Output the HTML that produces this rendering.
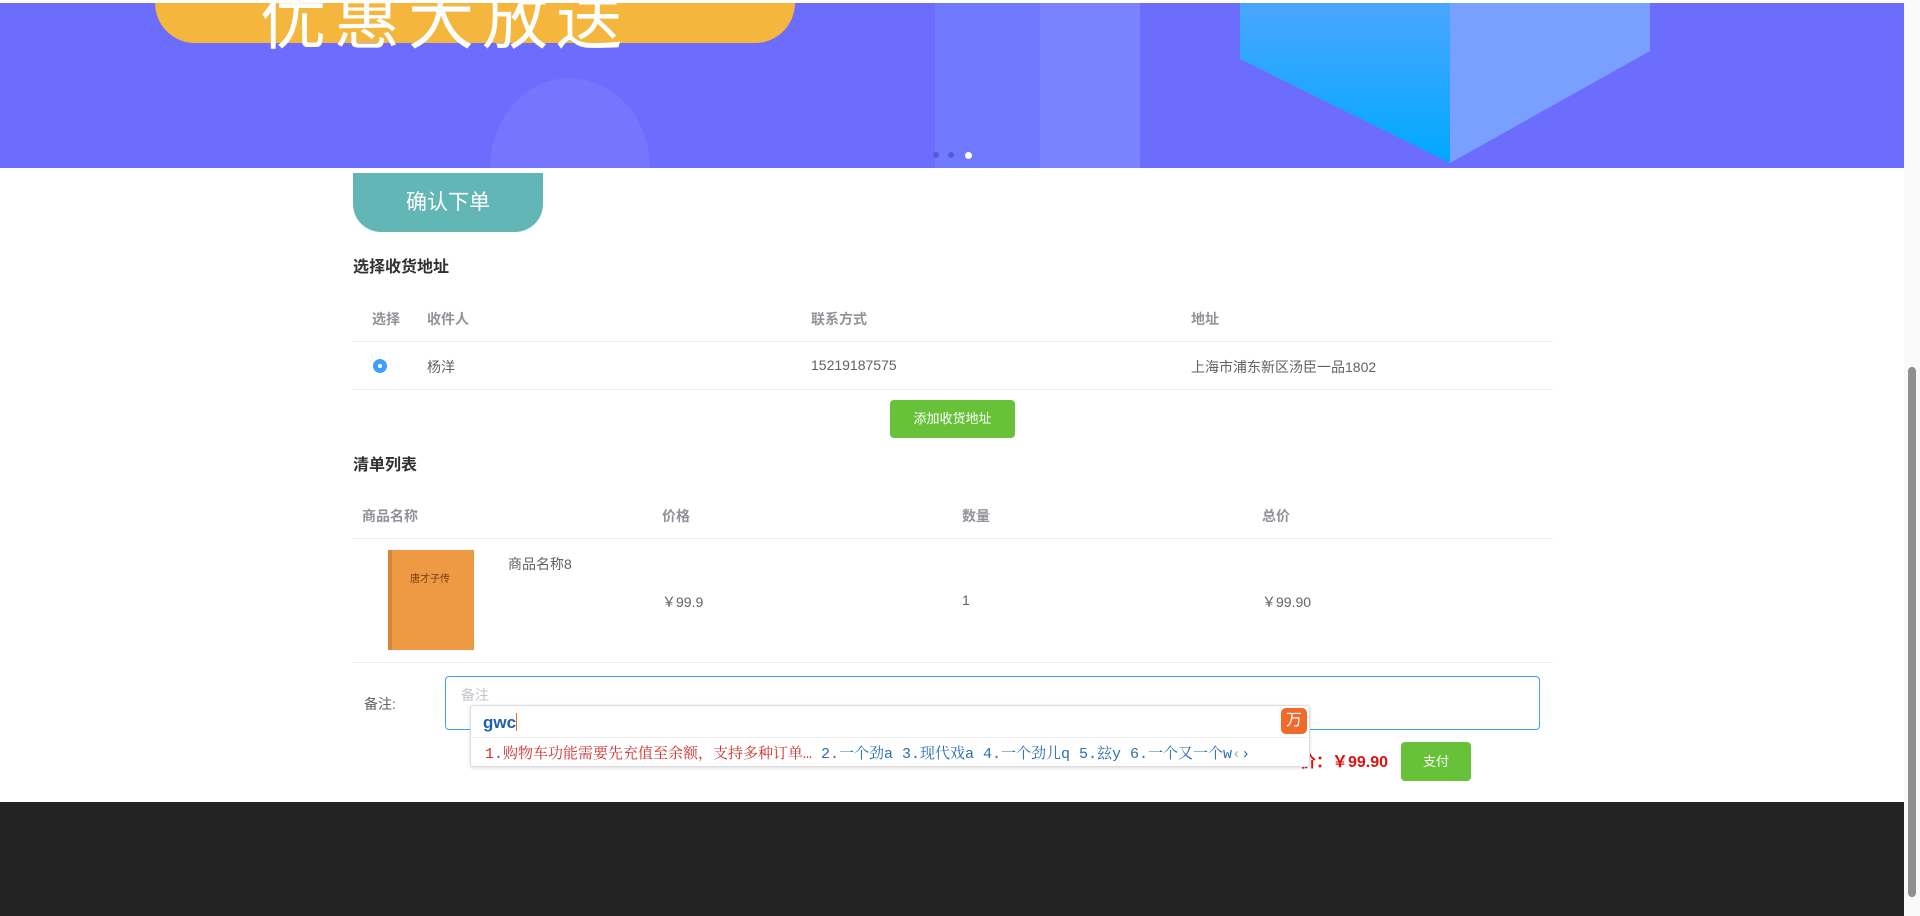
<!DOCTYPE html>
<html><head><meta charset="utf-8"><style>
*{margin:0;padding:0;box-sizing:border-box}
body{width:1920px;height:916px;overflow:hidden;background:#fff;font-family:"Liberation Sans","Noto Sans CJK SC",sans-serif;color:#606266;position:relative;font-size:14px}
.a{position:absolute}
.banner{left:0;top:3px;width:1904px;height:165px;background:#6c6cfd;overflow:hidden}
.sb{left:1904px;top:0;width:16px;height:916px;background:#f9f9f9}
.thumb{left:1908px;top:367px;width:8px;height:530px;background:#8f8f8f;border-radius:4px}
.h{font-weight:bold;color:#303133;font-size:16px}
.th{color:#909399;font-weight:bold;font-size:14px}
.line{height:1px;background:#ebeef5}
.btn{background:#67c23a;color:#fff;border-radius:4px;font-size:13px;text-align:center}
</style></head><body>
<div class="a banner">
  <div class="a" style="left:155px;top:-40px;width:640px;height:80px;background:#f4b63c;border-radius:0 0 40px 40px"></div>
  <div class="a" style="left:260px;top:-36px;font-size:66px;color:#fff;letter-spacing:8px">优惠大放送</div>
  <div class="a" style="left:490px;top:75px;width:160px;height:180px;background:#7575ff;border-radius:50%"></div>
  <div class="a" style="left:935px;top:0;width:200px;height:165px;background:#7179ff"></div>
  <div class="a" style="left:1040px;top:0;width:100px;height:165px;background:#7a82ff"></div>
  <div class="a" style="left:1240px;top:0;width:210px;height:160px;background:linear-gradient(#4aa6ff,#00a8ff);clip-path:polygon(0 0,100% 0,100% 100%,0 35%)"></div>
  <div class="a" style="left:1450px;top:0;width:200px;height:160px;background:#7aa0ff;clip-path:polygon(0 0,100% 0,100% 30%,0 100%)"></div>
  <div class="a" style="left:933px;top:149px;width:6px;height:6px;border-radius:3px;background:#5a5ad0"></div>
  <div class="a" style="left:948px;top:149px;width:6px;height:6px;border-radius:3px;background:#5a5ad0"></div>
  <div class="a" style="left:965px;top:149px;width:7px;height:7px;border-radius:4px;background:#fff"></div>
</div>
<div class="a sb"></div><div class="a thumb"></div>
<div class="a" style="left:353px;top:173px;width:190px;height:59px;background:#63b6b6;border-radius:0 0 28px 28px;color:#fff;font-size:21px;text-align:center;line-height:59px">确认下单</div>
<div class="a h" style="left:353px;top:253px">选择收货地址</div>
<div class="a th" style="left:372px;top:309px">选择</div>
<div class="a th" style="left:427px;top:309px">收件人</div>
<div class="a th" style="left:811px;top:309px">联系方式</div>
<div class="a th" style="left:1191px;top:309px">地址</div>
<div class="a line" style="left:353px;top:341px;width:1200px"></div>
<div class="a" style="left:373px;top:359px;width:14px;height:14px;border-radius:7px;background:#409eff"><div class="a" style="left:5px;top:5px;width:4px;height:4px;border-radius:2px;background:#fff"></div></div>
<div class="a" style="left:427px;top:357px">杨洋</div>
<div class="a" style="left:811px;top:357px">15219187575</div>
<div class="a" style="left:1191px;top:357px">上海市浦东新区汤臣一品1802</div>
<div class="a line" style="left:353px;top:389px;width:1200px"></div>
<div class="a btn" style="left:890px;top:400px;width:125px;height:38px;line-height:38px">添加收货地址</div>
<div class="a h" style="left:353px;top:451px">清单列表</div>
<div class="a th" style="left:362px;top:506px">商品名称</div>
<div class="a th" style="left:662px;top:506px">价格</div>
<div class="a th" style="left:962px;top:506px">数量</div>
<div class="a th" style="left:1262px;top:506px">总价</div>
<div class="a line" style="left:353px;top:538px;width:1200px"></div>
<div class="a" style="left:388px;top:550px;width:86px;height:100px;background:#ee9a45;border-left:4px solid #d8853a"><div class="a" style="left:18px;top:20px;font-size:10px;color:#7a3a10">唐才子传</div></div>
<div class="a" style="left:508px;top:554px">商品名称8</div>
<div class="a" style="left:662px;top:592px">￥99.9</div>
<div class="a" style="left:962px;top:592px">1</div>
<div class="a" style="left:1262px;top:592px">￥99.90</div>
<div class="a line" style="left:353px;top:662px;width:1200px"></div>
<div class="a" style="left:364px;top:694px">备注:</div>
<div class="a" style="left:445px;top:676px;width:1095px;height:54px;border:1px solid #409eff;border-radius:4px"><span class="a" style="left:15px;top:8px;color:#c0c4cc">备注</span></div>
<div class="a" style="left:1300px;top:748px;color:#e01010;font-weight:bold;font-size:16px">价：￥99.90</div>
<div class="a btn" style="left:1401px;top:742px;width:70px;height:39px;line-height:39px">支付</div>
<div class="a" style="left:470px;top:705px;width:840px;height:62px;background:#fff;border:1px solid #ddd;border-radius:3px;box-shadow:0 1px 3px rgba(0,0,0,.15)">
  <div class="a" style="left:12px;top:7px;color:#1e5fb0;font-weight:bold;font-size:17px">gwc<span style="display:inline-block;width:1px;height:18px;background:#e07020;vertical-align:-3px"></span></div>
  <div class="a" style="left:810px;top:2px;width:26px;height:26px;background:#f26a2a;border-radius:5px;color:#fff;text-align:center;line-height:26px;font-size:16px">万</div>
  <div class="a line" style="left:0;top:31px;width:840px;background:#eee"></div>
  <div class="a" style="left:14px;top:36px;font-family:'Liberation Mono','Noto Serif CJK SC',monospace;font-size:15px;white-space:nowrap"><span style="color:#d43030">1.购物车功能需要先充值至余额，支持多种订单…</span><span style="color:#2a6fb0">&nbsp;2.一个劲a 3.现代戏a 4.一个劲儿q 5.玆y 6.一个又一个w</span><span style="color:#aaa">‹</span><span style="color:#2a6fb0">›</span></div>
</div>
<div class="a" style="left:0;top:802px;width:1904px;height:114px;background:#232323"></div>
</body></html>
